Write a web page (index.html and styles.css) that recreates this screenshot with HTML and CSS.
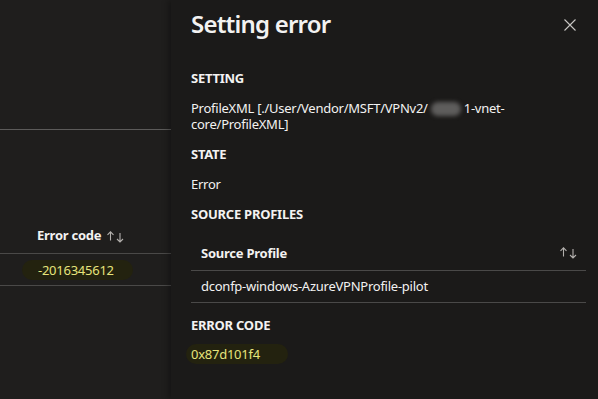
FILE: index.html
```html
<!DOCTYPE html>
<html lang="en">
<head>
    <meta charset="UTF-8">
    <title>Setting error</title>
    <link rel="stylesheet" href="styles.css">
</head>
<body>
    <div class="list">
        <div class="list-top"></div>
        <div class="list-head">
            <span class="col-name">Error code</span>
            <svg class="sort" width="17" height="12" viewBox="0 0 17 12">
                <path d="M3.5 9.5V0.8M0.5 3.8L3.5 0.8L6.5 3.8" />
                <path d="M13 2V11M10 8L13 11L16 8" />
            </svg>
        </div>
        <div class="list-row">
            <span class="code">-2016345612</span>
        </div>
    </div>

    <div class="panel">
        <div class="panel-head">
            <h1>Setting error</h1>
            <svg class="close" width="12" height="12" viewBox="0 0 12 12">
                <path d="M0.5 0.5L11.5 11.5M11.5 0.5L0.5 11.5" />
            </svg>
        </div>

        <h2>SETTING</h2>
        <p>ProfileXML [./User/Vendor/MSFT/VPNv2/<span class="blur"></span>1-vnet-core/ProfileXML]</p>

        <h2>STATE</h2>
        <p>Error</p>

        <h2>SOURCE PROFILES</h2>
        <div class="table">
            <div class="table-head">
                <span>Source Profile</span>
                <svg class="sort" width="17" height="12" viewBox="0 0 17 12">
                    <path d="M3.5 9.5V0.8M0.5 3.8L3.5 0.8L6.5 3.8" />
                    <path d="M13 2V11M10 8L13 11L16 8" />
                </svg>
            </div>
            <div class="table-row">dconfp-windows-AzureVPNProfile-pilot</div>
        </div>

        <h2 class="tight">ERROR CODE</h2>
        <div class="code-wrap">
            <span class="code code-panel">0x87d101f4</span>
        </div>
    </div>
</body>
</html>
```

FILE: styles.css
```css
body {
    margin: 0;
    height: 399px;
    overflow: hidden;
    display: flex;
    background-color: #1f1e1d;
    color: #f3f2f1;
    font-family: "Noto Sans", sans-serif;
    font-size: 13px;
    letter-spacing: -0.25px;
}
.list {
    width: 171px;
    flex-shrink: 0;
}
.list-top {
    height: 129px;
    border-bottom: 1px solid #5c5b5a;
}
.list-head {
    height: 124px;
    display: flex;
    align-items: flex-end;
    padding-left: 37px;
    padding-bottom: 8px;
    box-sizing: border-box;
    border-bottom: 1px solid #4a4948;
    font-weight: 700;
    line-height: 20px;
}
.list-head .sort {
    margin-left: 6px;
    margin-bottom: 2px;
}
.list-row {
    height: 32px;
    display: flex;
    align-items: center;
    padding-left: 22px;
    box-sizing: border-box;
    border-bottom: 1px solid #4a4948;
}
.code {
    display: inline-block;
    color: #e6e47c;
    background-color: #23220f;
    border-radius: 10px;
    padding: 0 19px 0 16px;
    line-height: 20px;
}
.sort path {
    fill: none;
    stroke: #b3b0ad;
    stroke-width: 1.1;
}
.panel {
    flex: 1;
    background-color: #1b1a19;
    padding: 0 12px 0 20px;
    box-shadow: -3px 0 6px rgba(0, 0, 0, 0.3);
}
.panel-head {
    display: flex;
    justify-content: space-between;
    align-items: flex-start;
    height: 68px;
}
h1 {
    margin: 8px 0 0;
    font-size: 24px;
    font-weight: 600;
    line-height: 32px;
    letter-spacing: -0.8px;
}
.close {
    margin: 19px 10px 0 0;
}
.close path {
    stroke: #c8c6c4;
    stroke-width: 1.1;
}
h2 {
    margin: 0 0 12px;
    font-size: 13px;
    font-weight: 700;
    line-height: 20px;
}
p {
    margin: 0 0 12px;
    line-height: 16px;
    padding-right: 60px;
}
.blur {
    display: inline-block;
    width: 30px;
    height: 14px;
    margin: 0 3px;
    vertical-align: -3px;
    background-color: #5e5d5c;
    border-radius: 7px;
    filter: blur(2px);
}
.table {
    margin: 9px 0 12px;
}
.table-head {
    display: flex;
    justify-content: space-between;
    align-items: center;
    height: 34px;
    padding: 0 9px 0 10px;
    border-bottom: 1px solid #4a4948;
    font-weight: 700;
    line-height: 20px;
}
.table-row {
    height: 31px;
    line-height: 31px;
    padding-left: 10px;
    border-bottom: 1px solid #4a4948;
}
.tight {
    margin-bottom: 9px;
}
.code-wrap {
    display: flex;
}
.code-panel {
    margin-left: -5px;
    padding: 0 28px 0 5px;
}
```
